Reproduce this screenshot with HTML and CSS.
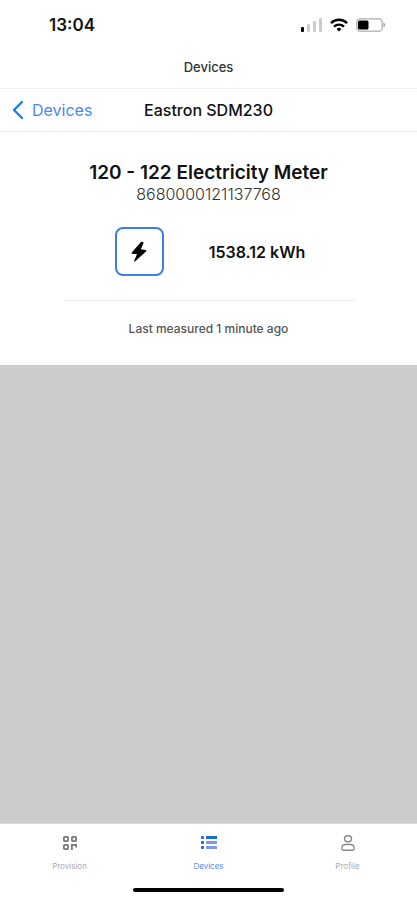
FILE: index.html
```html
<!DOCTYPE html>
<html lang="en">
<head>
<meta charset="utf-8">
<meta name="viewport" content="width=device-width, initial-scale=1">
<title>Devices</title>
<link rel="stylesheet" href="styles.css">
</head>
<body>
<div class="app">
  <div class="status">
    <time class="clock">13:04</time>
    <div class="indicators">
      <svg width="22" height="14" viewBox="0 0 22 14" aria-hidden="true">
        <rect x="1" y="9" width="3" height="5" rx="1" fill="#000"/>
        <rect x="7" y="6" width="3" height="8" rx="1" fill="#ccc"/>
        <rect x="13" y="3" width="3" height="11" rx="1" fill="#ccc"/>
        <rect x="19" y="0" width="3" height="14" rx="1" fill="#ccc"/>
      </svg>
      <svg width="18" height="14" viewBox="0 0 18 14" fill="none" stroke="#000" stroke-width="2.4" aria-hidden="true">
        <path d="M1 5.1a11.4 11.4 0 0 1 16 0"/>
        <path d="M4 8.6a7.2 7.2 0 0 1 10 0"/>
        <path d="M6.6 11a3.5 3.5 0 0 1 4.8 0L9 13.6z" fill="#000" stroke="none"/>
      </svg>
      <svg width="30" height="14" viewBox="0 0 30 14" aria-hidden="true">
        <rect x=".8" y=".8" width="25.4" height="12.4" rx="3.4" fill="#fff" stroke="#bbb" stroke-width="1.5"/>
        <rect x="2" y="2.5" width="10.5" height="9" rx="1.5" fill="#000"/>
        <path d="M27.5 4.5c2 .8 2 4.2 0 5z" fill="#999"/>
      </svg>
    </div>
  </div>
  <div class="title">Devices</div>
  <header class="nav">
    <a class="back" href="#">
      <svg width="12" height="20" viewBox="0 0 12 20" fill="none" stroke="#1673f5" stroke-width="2.2" stroke-linecap="round" stroke-linejoin="round" aria-hidden="true"><path d="M10 2 2 10l8 8"/></svg>
      Devices
    </a>
    <h1>Eastron SDM230</h1>
  </header>
  <main>
    <section class="card">
      <h2>120 - 122 Electricity Meter</h2>
      <p class="serial">8680000121137768</p>
      <div class="reading">
        <div class="energy">
          <svg width="18" height="22" viewBox="0 0 18 22" aria-hidden="true"><path d="M11 1 1.8 11.5q-.8 1.1.6 1.3L7 13.300 4.2 19.5q-.3 1.7 1 .8L16 10.5q1-1.2-.4-1.6l-4.8-.7 2.7-5.9Q13.5.3 11 1z"/></svg>
        </div>
        <strong>1538.12 kWh</strong>
      </div>
      <p class="measured">Last measured 1 minute ago</p>
    </section>
  </main>
  <footer>
    <nav class="tabs">
      <a href="#">
        <svg width="16" height="16" viewBox="0 0 16 16" fill="none" stroke="#777" stroke-width="1.8" aria-hidden="true">
          <rect x="1.9" y="1.9" width="4.2" height="4.2" rx="1"/>
          <rect x="9.9" y="1.9" width="4.2" height="4.2" rx="1"/>
          <rect x="1.9" y="9.9" width="4.2" height="4.2" rx="1"/>
          <path d="M9.9 15V9.9h4.200v2.500"/>
        </svg>
        <span>Provision</span>
      </a>
      <a class="active" href="#" aria-current="page">
        <svg width="16" height="16" viewBox="0 0 16 16" fill="#2469d8" aria-hidden="true">
          <rect x="0" y="1" width="3" height="3" rx="1"/><rect x="0" y="6" width="3" height="3" rx="1"/><rect x="0" y="11" width="3" height="3" rx="1"/>
          <rect x="5" y="1" width="11" height="3"/><rect x="5" y="6" width="11" height="3" fill="#7d9bea"/><rect x="5" y="11" width="11" height="3" fill="#7d9bea"/>
        </svg>
        <span>Devices</span>
      </a>
      <a href="#">
        <svg width="16" height="16" viewBox="0 0 16 16" fill="none" stroke="#888" stroke-width="1.4" aria-hidden="true">
          <rect x="4.500" y=".8" width="7" height="6" rx="3"/>
          <path d="M5.500 9.500h5c2.500 0 3.700 1.700 3.700 4 0 1-.5 1.700-1.500 1.700H3.300c-1 0-1.500-.7-1.500-1.700 0-2.300 1.200-4 3.700-4z"/>
        </svg>
        <span>Profile</span>
      </a>
    </nav>
    <div class="home"></div>
  </footer>
</div>
</body>
</html>
```
FILE: styles.css
```css
* { box-sizing: border-box; }
body, h1, h2, p { margin: 0; }
body {
  font-family: Inter, "Liberation Sans", sans-serif;
  color: #111;
  background: #fff;
}
a { color: inherit; text-decoration: none; }
svg { display: block; flex: none; }
.app {
  min-height: 100vh;
  display: flex;
  flex-direction: column;
}
.status {
  display: flex;
  justify-content: space-between;
  align-items: center;
  height: 48px;
  padding: 2px 31px 0 49px;
}
.clock { font-size: 17px; font-weight: 600; }
.indicators { display: flex; align-items: center; gap: 8px; }
.title {
  height: 41px;
  line-height: 38px;
  text-align: center;
  font-size: 13px;
  font-weight: 500;
  color: #333;
  border-bottom: 1px solid #eee;
}
.nav {
  display: grid;
  grid-template-columns: 1fr auto 1fr;
  align-items: center;
  height: 43px;
  padding: 0 12px;
  border-bottom: 1px solid #e8e8e8;
}
.back {
  display: flex;
  align-items: center;
  gap: 8px;
  font-size: 16px;
  color: #4a88f5;
}
h1 { font-size: 16px; font-weight: 500; }
main {
  flex: 1;
  background: #ccc;
}
.card {
  background: #fff;
  padding: 29px 32px 26px;
  text-align: center;
}
h2 { font-size: 19px; line-height: 24px; font-weight: 600; }
.serial { font-size: 16px; line-height: 18px; font-weight: 300; color: #333; }
.reading {
  display: flex;
  align-items: center;
  justify-content: center;
  gap: 45px;
  margin: 0 29px 0 32px;
  padding: 24px 0;
  border-bottom: 1px solid #eee;
}
.energy {
  display: grid;
  place-items: center;
  width: 49px;
  height: 49px;
  border: 2px solid #3d7fe0;
  border-radius: 8px;
}
strong { font-size: 16px; font-weight: 600; }
.measured {
  margin-top: 18px;
  font-size: 12px;
  line-height: 20px;
  font-weight: 500;
  color: #555;
}
footer {
  border-top: 1px solid #ddd;
  padding: 11px 0 8px;
}
.tabs { display: grid; grid-template-columns: repeat(3, 1fr); }
.tabs a {
  display: flex;
  flex-direction: column;
  align-items: center;
  gap: 10px;
  font-size: 8px;
  line-height: 10px;
  color: #aaa;
}
.tabs .active { color: #5b8cf0; }
.home {
  width: 36%;
  height: 4px;
  margin: 17px auto 0;
  border-radius: 2px;
  background: #000;
}
```
